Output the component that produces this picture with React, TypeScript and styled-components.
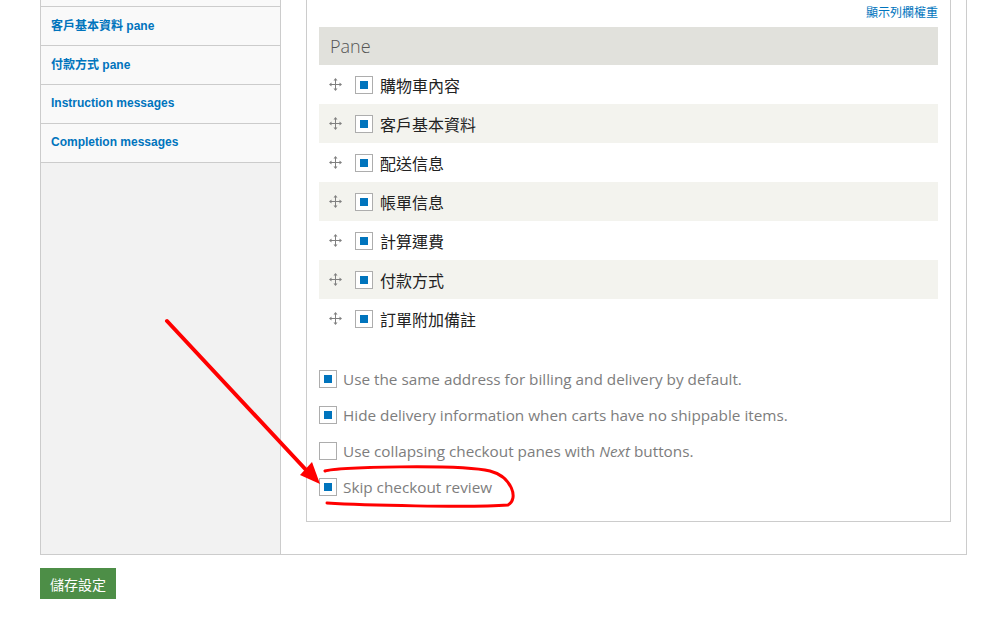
import React from 'react'
import styled, { createGlobalStyle } from 'styled-components'

const GlobalStyle = createGlobalStyle`
  html, body {
    margin: 0;
    padding: 0;
    background: #fff;
    overflow: hidden;
  }
  body {
    font-family: "Open Sans", "Noto Sans CJK TC", sans-serif;
  }
`

const Page = styled.div`
  position: relative;
  width: 1007px;
  height: 636px;
  overflow: hidden;
`

const Inner = styled.div`
  margin-top: -33px;
  padding-left: 40px;
`

const Frame = styled.div`
  width: 925px;
  display: flex;
  border: 1px solid #ccc;
  background: #fff;
`

const Sidebar = styled.ul`
  list-style: none;
  margin: 0;
  padding: 0;
  width: 239px;
  flex: none;
  background: #f2f2f2;
  border-right: 1px solid #ccc;
`

const SideItem = styled.li`
  display: flex;
  align-items: center;
  padding-left: 10px;
  padding-bottom: 3px;
  box-sizing: border-box;
  height: 39px;
  background: #f9f9f9;
  border-bottom: 1px solid #ccc;
  font-family: "Liberation Sans", "Noto Sans CJK TC", sans-serif;
  font-weight: bold;
  font-size: 12px;
  color: #0074bd;
`

const Main = styled.div`
  flex: 1;
  padding: 12px 15px 32px 25px;
`

const Fieldset = styled.div`
  border: 1px solid #ccc;
  padding: 22px 12px 16px;
`

const WeightLink = styled.div`
  text-align: right;
  line-height: 18px;
  font-size: 12px;
  font-family: "Noto Sans CJK TC", sans-serif;
  color: #0074bd;
`

const Table = styled.div`
  margin-top: 6px;
`

const HeadRow = styled.div`
  height: 38px;
  display: flex;
  align-items: center;
  padding-left: 11px;
  background: #e1e1dc;
  font-size: 18px;
  font-weight: 300;
  color: #555;
`

const Row = styled.div<{ $shade: boolean }>`
  height: 39px;
  display: flex;
  align-items: center;
  padding-left: 10px;
  background: ${p => (p.$shade ? '#f3f3ee' : '#fff')};
`

const Handle = styled.svg`
  width: 13px;
  height: 13px;
  flex: none;
  margin-right: 13px;
`

const Box = styled.span<{ $checked: boolean; $size: number }>`
  width: ${p => p.$size - 2}px;
  height: ${p => p.$size - 2}px;
  flex: none;
  border: 1px solid #adadad;
  background: #fff;
  display: flex;
  align-items: center;
  justify-content: center;
  &::after {
    content: '';
    width: 8px;
    height: 8px;
    background: ${p => (p.$checked ? '#0074bd' : 'transparent')};
  }
`

const PaneName = styled.span`
  margin-left: 7px;
  font-family: "Noto Sans CJK TC", sans-serif;
  font-size: 16px;
  color: #222;
`

const Options = styled.div`
  margin-top: 23px;
`

const Option = styled.div`
  height: 36px;
  display: flex;
  align-items: center;
`

const OptionText = styled.span`
  margin-left: 6px;
  font-size: 15.3px;
  color: #7d7d7d;
  em {
    font-style: italic;
  }
`

const SaveButton = styled.button`
  margin-top: 13px;
  width: 76px;
  height: 31px;
  border: none;
  background: #4d8e47;
  color: #fff;
  font-family: "Noto Sans CJK TC", sans-serif;
  font-size: 14px;
  padding: 0;
`

const Overlay = styled.svg`
  position: absolute;
  left: 0;
  top: 0;
  pointer-events: none;
`

const sideItems = ['', '客戶基本資料 pane', '付款方式 pane', 'Instruction messages', 'Completion messages']
const panes = ['購物車內容', '客戶基本資料', '配送信息', '帳單信息', '計算運費', '付款方式', '訂單附加備註']

const DragIcon = () => (
  <Handle viewBox="0 0 13 13">
    <g fill="#808080">
      <rect x="6" y="2" width="1" height="9" />
      <rect x="2" y="6" width="9" height="1" />
      <polygon points="6.5,0 4.5,2.5 8.5,2.5" />
      <polygon points="6.5,13 4.5,10.5 8.5,10.5" />
      <polygon points="0,6.5 2.5,4.5 2.5,8.5" />
      <polygon points="13,6.5 10.5,4.5 10.5,8.5" />
    </g>
  </Handle>
)

export default function App() {
  return (
    <Page>
      <GlobalStyle />
      <Inner>
        <Frame>
          <Sidebar>
            {sideItems.map((item, i) => (
              <SideItem key={i}>{item}</SideItem>
            ))}
          </Sidebar>
          <Main>
            <Fieldset>
              <WeightLink>顯示列欄權重</WeightLink>
              <Table>
                <HeadRow>Pane</HeadRow>
                {panes.map((pane, i) => (
                  <Row key={pane} $shade={i % 2 === 1}>
                    <DragIcon />
                    <Box $checked $size={18} />
                    <PaneName>{pane}</PaneName>
                  </Row>
                ))}
              </Table>
              <Options>
                <Option>
                  <Box $checked $size={18} />
                  <OptionText>Use the same address for billing and delivery by default.</OptionText>
                </Option>
                <Option>
                  <Box $checked $size={18} />
                  <OptionText>Hide delivery information when carts have no shippable items.</OptionText>
                </Option>
                <Option>
                  <Box $checked={false} $size={18} />
                  <OptionText>Use collapsing checkout panes with <em>Next</em> buttons.</OptionText>
                </Option>
                <Option>
                  <Box $checked $size={18} />
                  <OptionText>Skip checkout review</OptionText>
                </Option>
              </Options>
            </Fieldset>
          </Main>
        </Frame>
        <SaveButton>儲存設定</SaveButton>
      </Inner>
      <Overlay width="1007" height="636" viewBox="0 0 1007 636">
        <line x1="167" y1="321" x2="308" y2="472" stroke="#f00" strokeWidth="4" strokeLinecap="round" />
        <polygon points="320,484 300,475 312,462" fill="#f00" />
        <path
          d="M325,471 C335,467 460,464 490,471 C512,477 519,499 508,505 C470,508 360,505 327,503"
          fill="none"
          stroke="#f00"
          strokeWidth="3"
          strokeLinecap="round"
        />
      </Overlay>
    </Page>
  )
}
